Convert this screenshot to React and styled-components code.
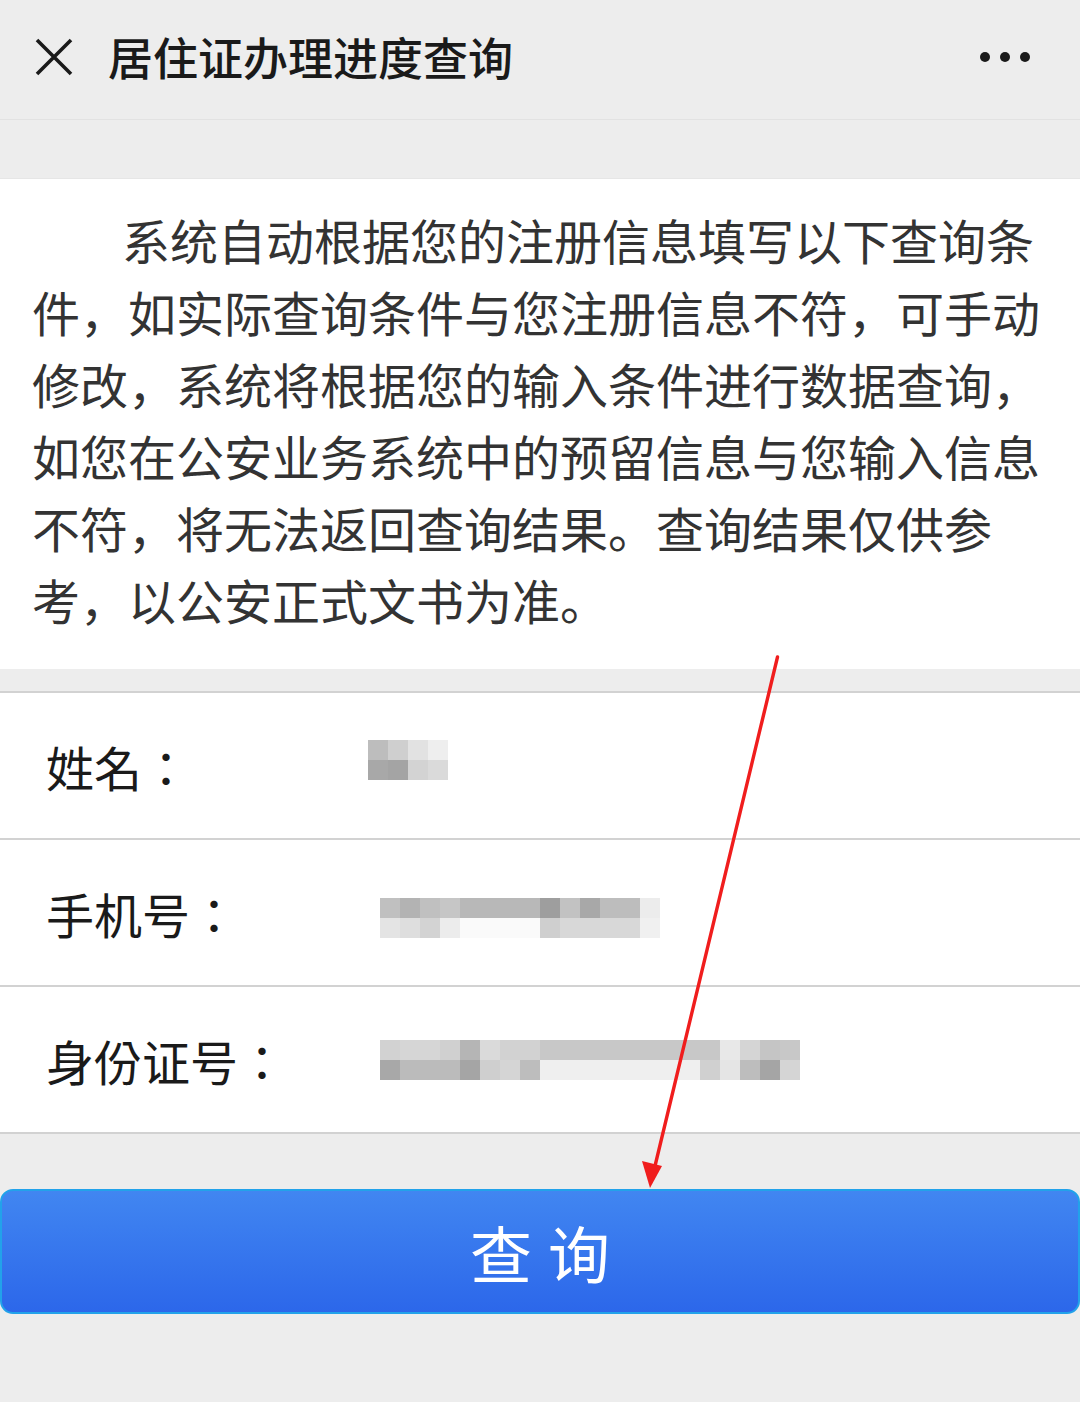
import React from "react";
import styled, { createGlobalStyle } from "styled-components";

const Global = createGlobalStyle`
  html, body { margin: 0; padding: 0; background: #ededed; }
  body { font-family: "Noto Sans CJK SC", "Noto Sans", sans-serif; }
  * { box-sizing: border-box; }
`;

const Page = styled.div`
  position: relative;
  width: 1080px;
  min-height: 1402px;
  background: #ededed;
  display: flex;
  flex-direction: column;
`;

const Header = styled.header`
  height: 120px;
  display: flex;
  align-items: center;
  padding: 0 50px 6px 34px;
  border-bottom: 1px solid #e2e2e2;
`;

const IconButton = styled.div`
  width: 40px;
  height: 40px;
  display: flex;
  align-items: center;
  justify-content: center;
`;

const Title = styled.h1`
  margin: 0 0 0 34px;
  flex: 1;
  font-size: 45px;
  font-weight: 500;
  color: #1a1a1a;
  letter-spacing: 0;
`;

const Notice = styled.section`
  margin-top: 58px;
  background: #fff;
  padding: 24px 36px 34px 32px;
  border-top: 1px solid #e6e6e6;
`;

const NoticeText = styled.p`
  margin: 0;
  font-size: 48px;
  line-height: 72px;
  color: #333;
  text-indent: 90px;
  line-break: strict;
`;

const Form = styled.section`
  margin-top: 22px;
  background: #fff;
  border-top: 2px solid #d2d2d2;
`;

const Row = styled.div`
  height: 147px;
  display: flex;
  align-items: center;
  border-bottom: 2px solid #d2d2d2;
  padding-left: 46px;
`;

const Label = styled.span`
  width: 334px;
  font-family: "Noto Sans CJK TC", "Noto Sans CJK SC", sans-serif;
  font-size: 48px;
  color: #1a1a1a;
`;

const Mosaic = styled.div`
  display: grid;
  grid-auto-flow: row;
  grid-template-columns: repeat(${(p) => p.$cols}, 20px);
  grid-auto-rows: ${(p) => p.$rowH}px;
  margin-top: ${(p) => p.$dy}px;
  margin-left: ${(p) => p.$dx}px;
`;

const Cell = styled.span`
  display: block;
  background: ${(p) => p.$shade};
`;

const ButtonWrap = styled.div`
  margin-top: 55px;
`;

const QueryButton = styled.button`
  width: 1080px;
  height: 125px;
  border: 2px solid #22a2ea;
  border-radius: 13px;
  background: linear-gradient(#4186f1, #2c67ea);
  color: #fff;
  font-family: "Noto Sans CJK SC", sans-serif;
  font-size: 62px;
  letter-spacing: 16px;
  padding: 0 0 0 16px;
  display: flex;
  align-items: center;
  justify-content: center;
`;

const Annotation = styled.svg`
  position: absolute;
  left: 0;
  top: 0;
  pointer-events: none;
`;

const nameCells = [
  ["#bdbdbd", "#cfcfcf", "#e2e2e2", "#eeeeee"],
  ["#a8a8a8", "#a4a4a4", "#d3d3d3", "#dadada"],
];

const phoneCells = [
  ["#c0c0c0", "#b3b3b3", "#c0c0c0", "#c6c6c6", "#b8b8b8", "#b8b8b8", "#b8b8b8", "#b8b8b8", "#9e9e9e", "#c2c2c2", "#a8a8a8", "#bdbdbd", "#bdbdbd", "#ececec"],
  ["#e4e4e4", "#dedede", "#d3d3d3", "#ececec", "#fafafa", "#fafafa", "#fafafa", "#fafafa", "#cfcfcf", "#d8d8d8", "#d8d8d8", "#d8d8d8", "#d8d8d8", "#f0f0f0"],
];

const idCells = [
  ["#d2d2d2", "#d6d6d6", "#d6d6d6", "#d0d0d0", "#b5b5b5", "#dadada", "#d2d2d2", "#d2d2d2", "#c8c8c8", "#c8c8c8", "#c8c8c8", "#c8c8c8", "#c8c8c8", "#c8c8c8", "#c8c8c8", "#c8c8c8", "#c8c8c8", "#e8e8e8", "#d5d5d5", "#c5c5c5", "#c8c8c8"],
  ["#a8a8a8", "#bbbbbb", "#bbbbbb", "#bbbbbb", "#a5a5a5", "#cfcfcf", "#d5d5d5", "#bdbdbd", "#efefef", "#efefef", "#efefef", "#efefef", "#efefef", "#efefef", "#efefef", "#efefef", "#d0d0d0", "#e5e5e5", "#bdbdbd", "#a5a5a5", "#d5d5d5"],
];

function Blur({ cells, rowH = 20, dy = 0, dx = 0 }) {
  return (
    <Mosaic $cols={cells[0].length} $rowH={rowH} $dy={dy} $dx={dx}>
      {cells.flat().map((c, i) => (
        <Cell key={i} $shade={c} />
      ))}
    </Mosaic>
  );
}

export default function App() {
  return (
    <Page>
      <Global />
      <Header>
        <IconButton>
          <svg width="40" height="40" viewBox="0 0 40 40">
            <path d="M3 3 L37 37 M37 3 L3 37" stroke="#1a1a1a" strokeWidth="3.6" fill="none" />
          </svg>
        </IconButton>
        <Title>居住证办理进度查询</Title>
        <svg width="50" height="12" viewBox="0 0 50 12">
          <circle cx="5" cy="6" r="5" fill="#1a1a1a" />
          <circle cx="25" cy="6" r="5" fill="#1a1a1a" />
          <circle cx="45" cy="6" r="5" fill="#1a1a1a" />
        </svg>
      </Header>
      <Notice>
        <NoticeText>
          系统自动根据您的注册信息填写以下查询条件，如实际查询条件与您注册信息不符，可手动修改，系统将根据您的输入条件进行数据查询，如您在公安业务系统中的预留信息与您输入信息不符，将无法返回查询结果。查询结果仅供参考，以公安正式文书为准。
        </NoticeText>
      </Notice>
      <Form>
        <Row>
          <Label>姓名：</Label>
          <Blur cells={nameCells} dy={-12} dx={-12} />
        </Row>
        <Row>
          <Label>手机号：</Label>
          <Blur cells={phoneCells} dy={10} />
        </Row>
        <Row>
          <Label>身份证号：</Label>
          <Blur cells={idCells} dy={0} />
        </Row>
      </Form>
      <ButtonWrap>
        <QueryButton>查询</QueryButton>
      </ButtonWrap>
      <Annotation width="1080" height="1402" viewBox="0 0 1080 1402">
        <path d="M777.5 657 L655 1166" stroke="#f01d1d" strokeWidth="3.4" strokeLinecap="round" fill="none" />
        <polygon points="650,1188 642,1161 662,1166" fill="#f01d1d" />
      </Annotation>
    </Page>
  );
}
